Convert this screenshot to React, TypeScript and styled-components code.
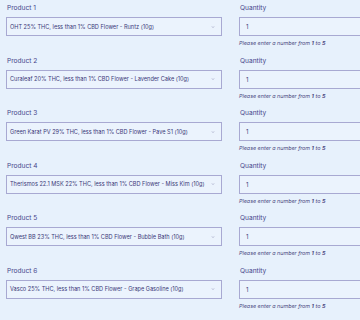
import React from "react";
import styled, { createGlobalStyle } from "styled-components";

const Global = createGlobalStyle`
  html, body { margin: 0; padding: 0; background: #e7f1fc; overflow: hidden; }
  body { font-family: Inter, "Noto Sans", sans-serif; color: #3a3878; }
`;

const Page = styled.div`
  padding: 4px 0 0 6px;
  width: 420px;
  display: flex;
  flex-direction: column;
  gap: 9.6px;
`;

const Row = styled.div`
  display: grid;
  grid-template-columns: 216px 150px;
  column-gap: 17px;
`;

const Field = styled.div`
  display: flex;
  flex-direction: column;
`;

const Label = styled.label`
  font-size: 6.6px;
  line-height: 9px;
  height: 9px;
  margin: 0 0 4px 1px;
  color: #46448a;
  font-weight: 400;
`;

const SelectBox = styled.div`
  box-sizing: border-box;
  height: 19px;
  border: 1px solid #a8a9d2;
  background: #ebf3fd;
  display: flex;
  align-items: center;
  justify-content: space-between;
  padding: 0 6px 0 3px;
  font-size: 5.6px;
  color: #3a3878;
  white-space: nowrap;
  overflow: hidden;
`;

const Chevron = styled.svg`
  width: 4px;
  height: 4px;
  flex: none;
`;

const InputBox = styled.div`
  box-sizing: border-box;
  height: 19px;
  border: 1px solid #a8a9d2;
  background: #ebf3fd;
  display: flex;
  align-items: center;
  padding: 0 6px;
  font-size: 6px;
  color: #3a3878;
`;

const Help = styled.div`
  margin-top: 4px;
  font-size: 5.4px;
  line-height: 7px;
  font-style: italic;
  color: #4a4880;
  b { font-weight: 700; }
`;

const products = [
  "OHT 25% THC, less than 1% CBD Flower - Runtz (10g)",
  "Curaleaf 20% THC, less than 1% CBD Flower - Lavender Cake (10g)",
  "Green Karat PV 29% THC, less than 1% CBD Flower - Pave S1 (10g)",
  "Therismos 22.1 MSK 22% THC, less than 1% CBD Flower - Miss Kim (10g)",
  "Qwest BB 23% THC, less than 1% CBD Flower - Bubble Bath (10g)",
  "Vasco 25% THC, less than 1% CBD Flower - Grape Gasoline (10g)",
];

export default function App() {
  return (
    <>
      <Global />
      <Page>
        {products.map((p, i) => (
          <Row key={i}>
            <Field>
              <Label>Product {i + 1}</Label>
              <SelectBox>
                <span>{p}</span>
                <Chevron viewBox="0 0 8 8">
                  <path d="M2 3l2 2 2-2" fill="none" stroke="#6b6a99" strokeWidth="1" />
                </Chevron>
              </SelectBox>
            </Field>
            <Field>
              <Label>Quantity</Label>
              <InputBox>1</InputBox>
              <Help>
                Please enter a number from <b>1</b> to <b>5</b>
              </Help>
            </Field>
          </Row>
        ))}
      </Page>
    </>
  );
}
